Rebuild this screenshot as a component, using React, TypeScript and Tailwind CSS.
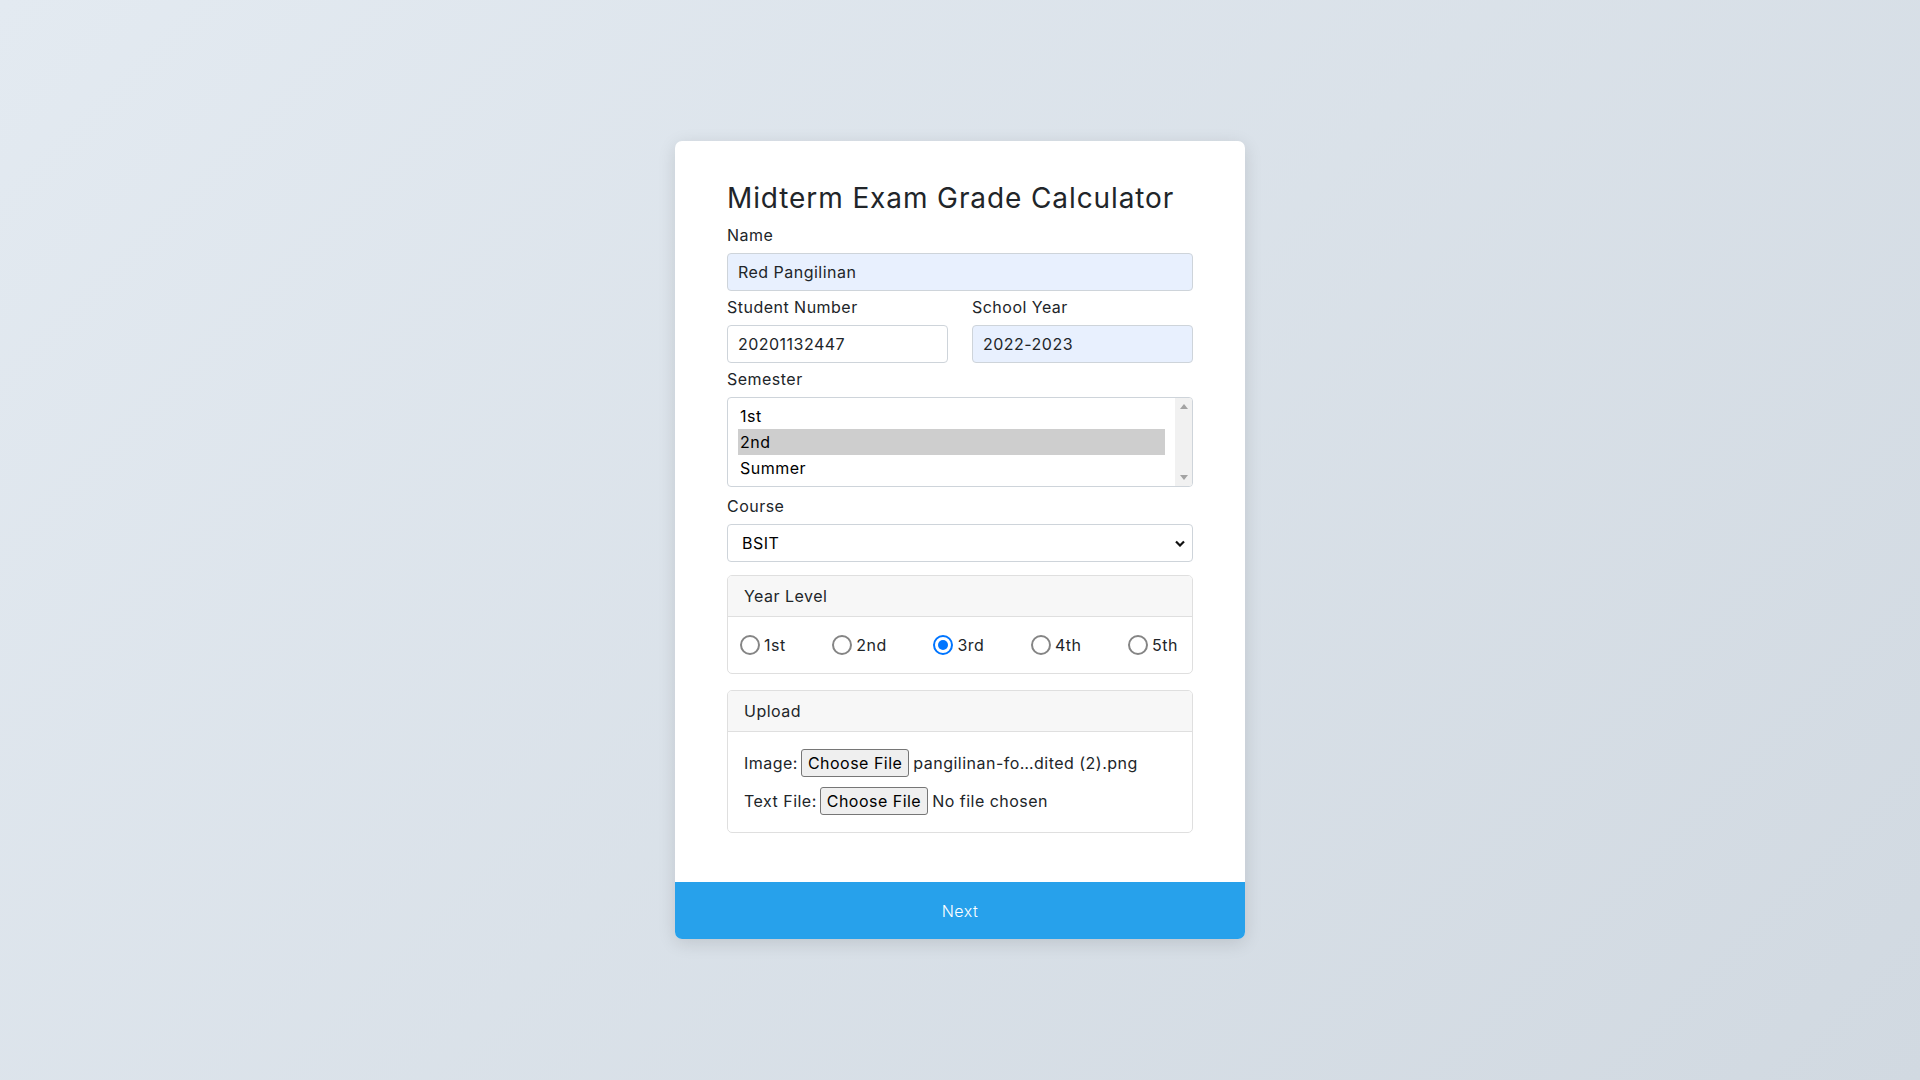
import React from 'react';

const years = ['1st', '2nd', '3rd', '4th', '5th'];
const semesters = ['1st', '2nd', 'Summer'];

function Radio({ checked, label }: { checked?: boolean; label: string }) {
  return (
    <label className="flex items-center gap-[4px]">
      {checked ? (
        <span className="w-5 h-5 rounded-full border-2 border-[#0075ff] bg-white flex items-center justify-center">
          <span className="w-[10px] h-[10px] rounded-full bg-[#0075ff]"></span>
        </span>
      ) : (
        <span className="w-5 h-5 rounded-full border-2 border-[#858585] bg-white"></span>
      )}
      <span>{label}</span>
    </label>
  );
}

function FileButton() {
  return (
    <span className="inline-flex items-center h-[28px] px-[6px] ml-[3px] mr-[4px] border border-[#767676] bg-[#efefef] rounded-[3px] text-black">
      Choose File
    </span>
  );
}

export default function App() {
  return (
    <div className="min-h-screen w-full flex items-center justify-center bg-[linear-gradient(135deg,#e3eaf1,#d1d9e1)] font-['Inter',sans-serif] text-[16px] tracking-[0.03em] text-[#212529]">
      <div className="w-[570px] bg-white rounded-[7px] shadow-[0_4px_18px_rgba(0,0,0,0.12)] overflow-hidden">
        <div className="px-[52px] pt-[40px] pb-[49px]">
          <h3 className="text-[28px] leading-[34px] font-normal tracking-[0.032em] mb-2">Midterm Exam Grade Calculator</h3>

          <div className="leading-6 mb-[6px]">Name</div>
          <div className="h-[38px] rounded-[4px] border border-[#ced4da] bg-[#e8f0fe] px-[10px] flex items-center">
            Red Pangilinan
          </div>

          <div className="grid grid-cols-2 gap-x-6 mt-1">
            <div>
              <div className="leading-6 mb-[6px]">Student Number</div>
              <div className="h-[38px] rounded-[4px] border border-[#ced4da] bg-white px-[10px] flex items-center">
                20201132447
              </div>
            </div>
            <div>
              <div className="leading-6 mb-[6px]">School Year</div>
              <div className="h-[38px] rounded-[4px] border border-[#ced4da] bg-[#e8f0fe] px-[10px] flex items-center">
                2022-2023
              </div>
            </div>
          </div>

          <div className="leading-6 mt-1 mb-[6px]">Semester</div>
          <div className="h-[90px] rounded-[4px] border border-[#ced4da] flex overflow-hidden">
            <div className="flex-1 px-[10px] py-[5px]">
              {semesters.map((s) => (
                <div
                  key={s}
                  className={`h-[26px] px-[2px] flex items-center text-black ${s === '2nd' ? 'bg-[#cecece]' : ''}`}
                >
                  {s}
                </div>
              ))}
            </div>
            <div className="w-[17px] bg-[#f1f1f1] flex flex-col items-center justify-between py-[6px]">
              <svg width="8" height="5" viewBox="0 0 8 5"><path d="M4 0 L8 5 L0 5 Z" fill="#a3a3a3" /></svg>
              <svg width="8" height="5" viewBox="0 0 8 5"><path d="M0 0 L8 0 L4 5 Z" fill="#a3a3a3" /></svg>
            </div>
          </div>

          <div className="leading-6 mt-[7px] mb-[6px]">Course</div>
          <div className="h-[38px] rounded-[4px] border border-[#ced4da] bg-white pl-[14px] pr-[7px] flex items-center justify-between text-black">
            <span>BSIT</span>
            <svg width="10" height="7" viewBox="0 0 10 7">
              <path d="M1 1.5 L5 5.5 L9 1.5" fill="none" stroke="#111" strokeWidth="2.2" />
            </svg>
          </div>

          <div className="mt-[13px] rounded-[5px] border border-[#dfdfdf] overflow-hidden">
            <div className="bg-[#f7f7f7] border-b border-[#dfdfdf] px-4 py-2 leading-6">Year Level</div>
            <div className="pl-3 pr-[14px] py-4 flex items-center justify-between leading-6">
              {years.map((y) => (
                <Radio key={y} label={y} checked={y === '3rd'} />
              ))}
            </div>
          </div>

          <div className="mt-4 rounded-[5px] border border-[#dfdfdf] overflow-hidden">
            <div className="bg-[#f7f7f7] border-b border-[#dfdfdf] px-4 py-2 leading-6">Upload</div>
            <div className="px-4 py-4 flex flex-col gap-2">
              <div className="h-[30px] flex items-center">
                <span>Image:</span>
                <FileButton />
                <span>pangilinan-fo…dited (2).png</span>
              </div>
              <div className="h-[30px] flex items-center">
                <span>Text File:</span>
                <FileButton />
                <span>No file chosen</span>
              </div>
            </div>
          </div>
        </div>

        <button className="w-full h-[57px] bg-[#27a1eb] text-white font-light text-[16px]">Next</button>
      </div>
    </div>
  );
}
